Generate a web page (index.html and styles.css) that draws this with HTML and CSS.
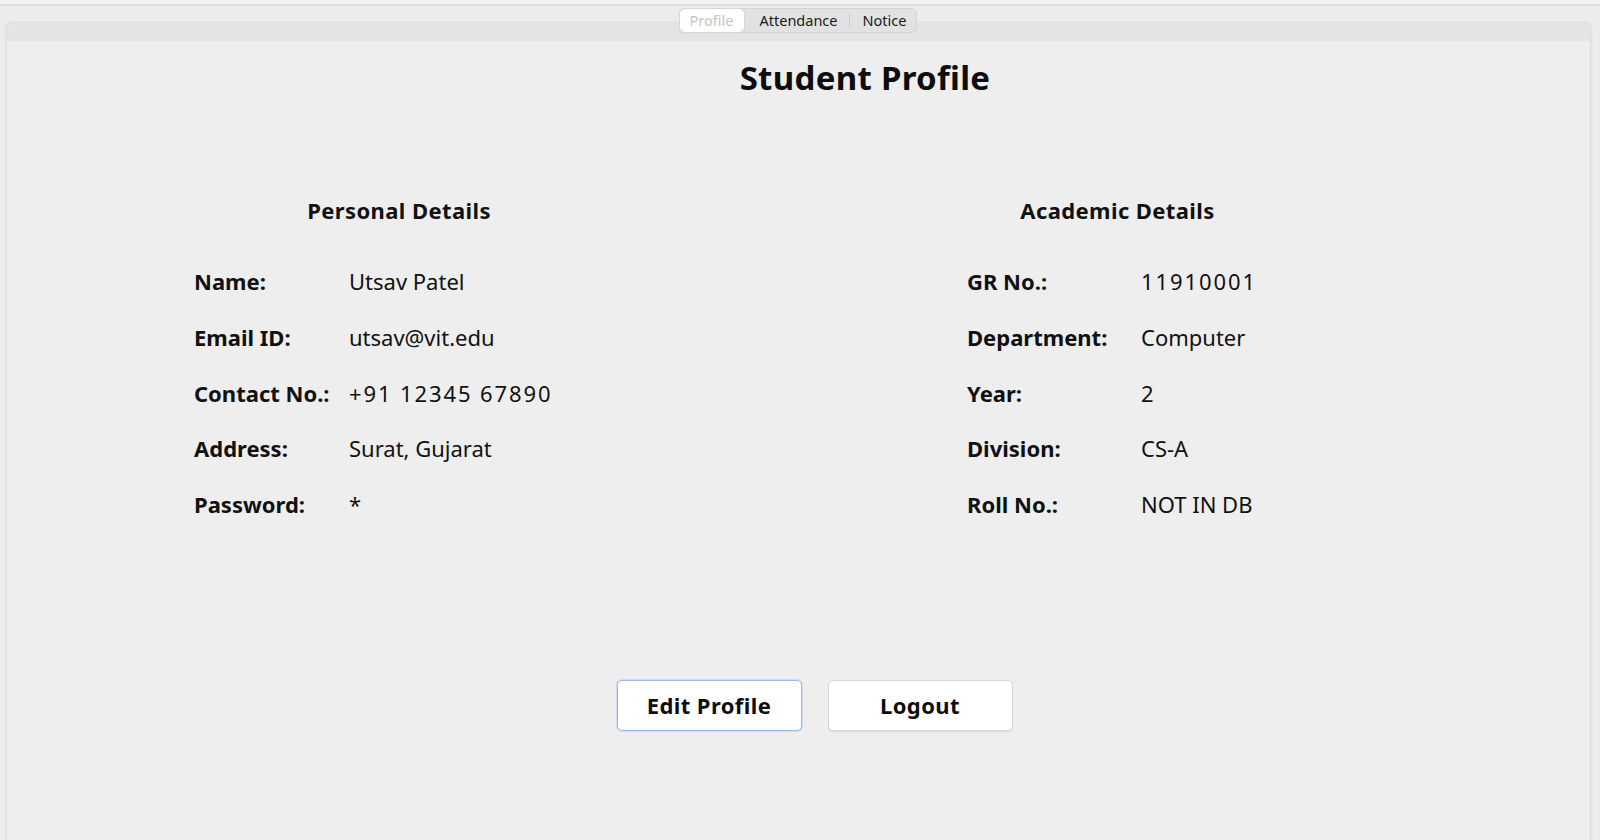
FILE: index.html
```html
<!DOCTYPE html>
<html lang="en">
<head>
<meta charset="utf-8">
<title>Student Profile</title>
<link rel="stylesheet" href="styles.css">
</head>
<body>
<div class="topbar"></div>
<div class="tabs-row">
  <div class="tabs">
    <div class="tab tab-active">Profile</div>
    <div class="tab">Attendance</div>
    <div class="tab-sep"></div>
    <div class="tab">Notice</div>
  </div>
</div>
<div class="panel">
  <div class="panel-head"></div>
  <div class="panel-body">
    <h1 class="title">Student Profile</h1>
    <div class="details">
      <div class="col col-left">
        <h2 class="section-title">Personal Details</h2>
        <div class="grid">
          <div class="label">Name:</div><div class="value">Utsav Patel</div>
          <div class="label">Email ID:</div><div class="value">utsav@vit.edu</div>
          <div class="label">Contact No.:</div><div class="value num">+91 12345 67890</div>
          <div class="label">Address:</div><div class="value">Surat, Gujarat</div>
          <div class="label">Password:</div><div class="value">*</div>
        </div>
      </div>
      <div class="col col-right">
        <h2 class="section-title">Academic Details</h2>
        <div class="grid">
          <div class="label">GR No.:</div><div class="value num">11910001</div>
          <div class="label">Department:</div><div class="value">Computer</div>
          <div class="label">Year:</div><div class="value num">2</div>
          <div class="label">Division:</div><div class="value">CS-A</div>
          <div class="label">Roll No.:</div><div class="value">NOT IN DB</div>
        </div>
      </div>
    </div>
    <div class="actions">
      <button class="btn btn-focus">Edit Profile</button>
      <button class="btn">Logout</button>
    </div>
  </div>
</div>
</body>
</html>
```

FILE: styles.css
```css
html, body {
  margin: 0;
  padding: 0;
  height: 100%;
}
body {
  background: #ececec;
  font-family: "Noto Sans", "DejaVu Sans", sans-serif;
  color: #111;
  overflow: hidden;
}
.topbar {
  height: 4px;
  background: #f3f4f4;
  border-bottom: 2px solid #e0e0e0;
}
.tabs-row {
  display: flex;
  justify-content: center;
  margin-top: 2px;
  position: relative;
  z-index: 2;
}
.tabs {
  display: flex;
  align-items: center;
  height: 23px;
  background: #e2e2e2;
  border: 1px solid #d3d3d3;
  border-radius: 6px;
  margin-left: -4px;
}
.tab {
  font-size: 14.5px;
  line-height: 23px;
  color: #1a1a1a;
  padding: 0 11px 0 15px;
}
.tab:last-child {
  padding: 0 10px 0 13px;
}
.tab-active {
  background: #ffffff;
  color: #c4c4c4;
  border-radius: 5px;
  box-shadow: 0 0 0 1px #d6d6d6, 0 1px 1px rgba(0,0,0,0.15);
  padding: 0 11px 0 10px;
  height: 23px;
}
.tab-sep {
  width: 1px;
  height: 13px;
  background: #c9c9c9;
}
.panel {
  margin: -11px 9px 0 6px;
  height: calc(100% - 22px);
  border: 1px solid #dddddd;
  border-bottom: none;
  border-radius: 6px 6px 0 0;
  background: #eeeeee;
  box-shadow: -1px 0 2px rgba(0,0,0,0.04), 1px 0 2px rgba(0,0,0,0.04);
  position: relative;
  z-index: 1;
  display: flex;
  flex-direction: column;
}
.panel-head {
  height: 18px;
  background: #e4e4e4;
  border-radius: 6px 6px 0 0;
}
.panel-body {
  flex: 1;
  display: flex;
  flex-direction: column;
}
.title {
  margin: 17px 0 0;
  padding-left: 133px;
  text-align: center;
  font-size: 33px;
  line-height: 40px;
  font-weight: 700;
  letter-spacing: 0.3px;
  color: #0d0d0d;
}
.details {
  display: flex;
  margin-top: 97px;
  padding-left: 187px;
}
.col-left {
  width: 773px;
}
.section-title {
  margin: 0;
  font-size: 22px;
  line-height: 30px;
  font-weight: 700;
  letter-spacing: 0.4px;
  text-align: center;
}
.col-left .section-title {
  width: 410px;
}
.col-right .section-title {
  width: 301px;
}
.grid {
  display: grid;
  margin-top: 29px;
  font-size: 22px;
  line-height: 55.8px;
}
.col-left .grid {
  grid-template-columns: 155px auto;
}
.col-right .grid {
  grid-template-columns: 174px auto;
}
.label {
  font-weight: 700;
}
.value {
  font-weight: 400;
}
.num {
  letter-spacing: 1.9px;
}
.actions {
  display: flex;
  justify-content: center;
  gap: 26px;
  margin-top: 147px;
  padding-left: 32px;
}
.btn {
  width: 185px;
  height: 51px;
  background: #ffffff;
  border: 1px solid #d6d6d6;
  border-radius: 5px;
  box-shadow: 0 1px 1px rgba(0,0,0,0.08);
  font-family: "Noto Sans", "DejaVu Sans", sans-serif;
  font-size: 22px;
  font-weight: 700;
  letter-spacing: 0.4px;
  color: #0d0d0d;
  padding: 0;
}
.btn-focus {
  border: 1.5px solid #96bde9;
  box-shadow: 0 0 0 1px rgba(150,189,233,0.35);
}
```
